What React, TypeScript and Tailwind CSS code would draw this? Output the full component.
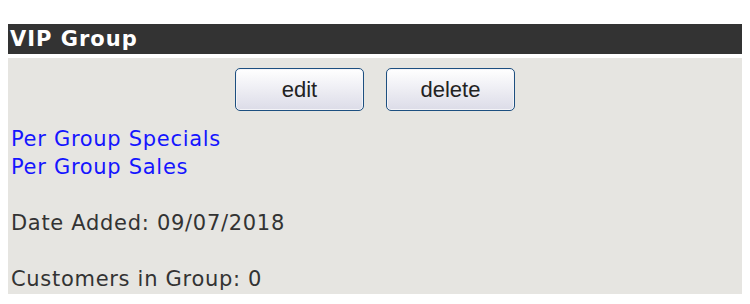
export default function App() {
  return (
    <div className="w-[750px] h-[304px] bg-white pt-6 px-2 font-['DejaVu_Sans',Verdana,sans-serif]">
      <div className="h-[30px] bg-[#333333] pl-[2px] text-[21px] font-bold leading-[30px] tracking-[1px] text-white">
        VIP Group
      </div>
      <div className="mt-1 h-[236px] bg-[#e6e5e1] pt-[10px]">
        <div className="flex justify-center gap-[22px]">
          {["edit", "delete"].map((label) => (
            <button
              key={label}
              className="h-[43px] w-[129px] rounded-[5px] border border-[#1d4f80] bg-gradient-to-b from-white to-[#dcdce8] font-['Liberation_Sans',Arial,sans-serif] text-[22px] text-[#222] shadow-[inset_0_0_0_1px_#f4f4f8]"
            >
              {label}
            </button>
          ))}
        </div>
        <div className="mt-[14px] pl-[3px] text-[21px] leading-[28px] tracking-[0.7px] text-[#333]">
          <a href="#" className="block text-[#1515ff]">
            Per Group Specials
          </a>
          <a href="#" className="block text-[#1515ff]">
            Per Group Sales
          </a>
          <br />
          <div>Date Added: 09/07/2018</div>
          <br />
          <div>Customers in Group: 0</div>
        </div>
      </div>
    </div>
  );
}
